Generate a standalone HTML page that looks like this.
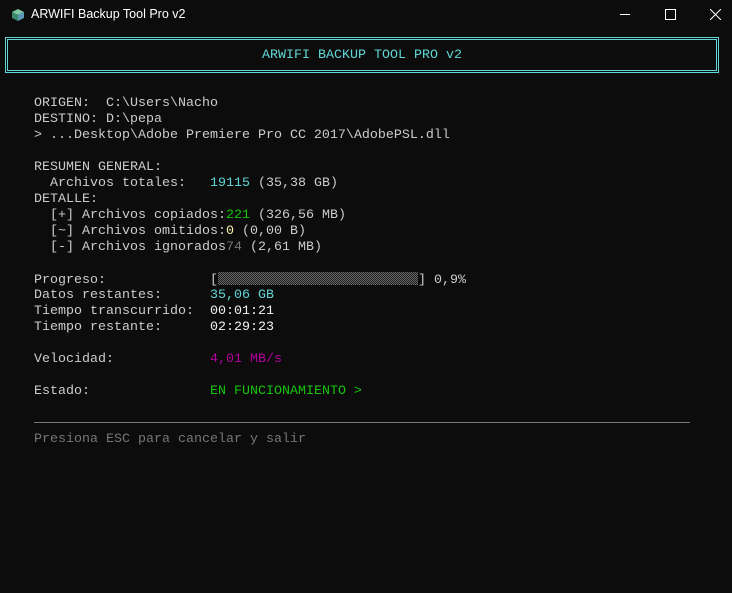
<!DOCTYPE html>
<html><head><style>
*{margin:0;padding:0}
body{width:732px;height:593px;background:#0c0c0c;overflow:hidden;position:relative;font-family:"Liberation Mono",monospace;font-size:13.33px;color:#cccccc}
.tb{position:absolute;left:0;top:0;width:732px;height:30px;font-family:"Liberation Sans",sans-serif;font-size:12.5px;color:#fff}
.tb .t{position:absolute;left:31px;top:7px}
.box{position:absolute;left:5px;top:37px;width:708px;height:30px;border:3px double #61d6d6}
.box div{position:absolute;left:0;right:0;top:8px;text-align:center;color:#61d6d6;line-height:16px}
.ln{position:absolute;left:34px;white-space:pre;line-height:16px;height:16px}
.c{color:#61d6d6}.g{color:#16c60c}.y{color:#f9f1a5}.m{color:#b4009e}.d{color:#767676}.w{color:#f2f2f2}
.bar{display:inline-block;width:200px;height:13px;vertical-align:-2px;background:repeating-conic-gradient(#6a6a6a 0 25%,#1a1a1a 0 50%) 0 0/2px 2px}
</style></head><body>
<div class="tb">
<svg style="position:absolute;left:11px;top:8px" width="14" height="14" viewBox="0 0 14 14"><polygon points="7,1 13,4 7,7 1,4" fill="#7fc8a0"/><polygon points="1,4 7,7 7,13 1,10" fill="#3a8a6a"/><polygon points="13,4 7,7 7,13 13,10" fill="#5a9ab8"/></svg>
<span class="t">ARWIFI Backup Tool Pro v2</span>
<div style="position:absolute;left:620px;top:14px;width:10px;height:1px;background:#fff"></div>
<div style="position:absolute;left:665px;top:9px;width:9px;height:9px;border:1px solid #fff"></div>
<svg style="position:absolute;left:710px;top:9px" width="11" height="11" viewBox="0 0 11 11"><path d="M0 0L11 11M11 0L0 11" stroke="#fff" stroke-width="1"/></svg>
</div>
<div class="box"><div>ARWIFI BACKUP TOOL PRO v2</div></div>
<div class="ln" style="top:96px">ORIGEN:  C:\Users\Nacho</div>
<div class="ln" style="top:112px">DESTINO: D:\pepa</div>
<div class="ln" style="top:128px">&gt; ...Desktop\Adobe Premiere Pro CC 2017\AdobePSL.dll</div>
<div class="ln" style="top:160px">RESUMEN GENERAL:</div>
<div class="ln" style="top:176px">  Archivos totales:   <span class="c">19115</span> (35,38 GB)</div>
<div class="ln" style="top:192px">DETALLE:</div>
<div class="ln" style="top:208px">  [+] Archivos copiados:<span class="g">221</span> (326,56 MB)</div>
<div class="ln" style="top:224px">  [~] Archivos omitidos:<span class="y">0</span> (0,00 B)</div>
<div class="ln" style="top:240px">  [-] Archivos ignorados<span class="d">74</span> (2,61 MB)</div>
<div class="ln" style="top:272px">Progreso:             [<span class="bar"></span>] 0,9%</div>
<div class="ln" style="top:288px">Datos restantes:      <span class="c">35,06 GB</span></div>
<div class="ln" style="top:304px">Tiempo transcurrido:  <span class="w">00:01:21</span></div>
<div class="ln" style="top:320px">Tiempo restante:      <span class="w">02:29:23</span></div>
<div class="ln" style="top:352px">Velocidad:            <span class="m">4,01 MB/s</span></div>
<div class="ln" style="top:384px">Estado:               <span class="g">EN FUNCIONAMIENTO &gt;</span></div>
<div style="position:absolute;left:34px;top:422px;width:656px;height:1px;background:#767676"></div>
<div class="ln d" style="top:432px">Presiona ESC para cancelar y salir</div>
</body></html>
